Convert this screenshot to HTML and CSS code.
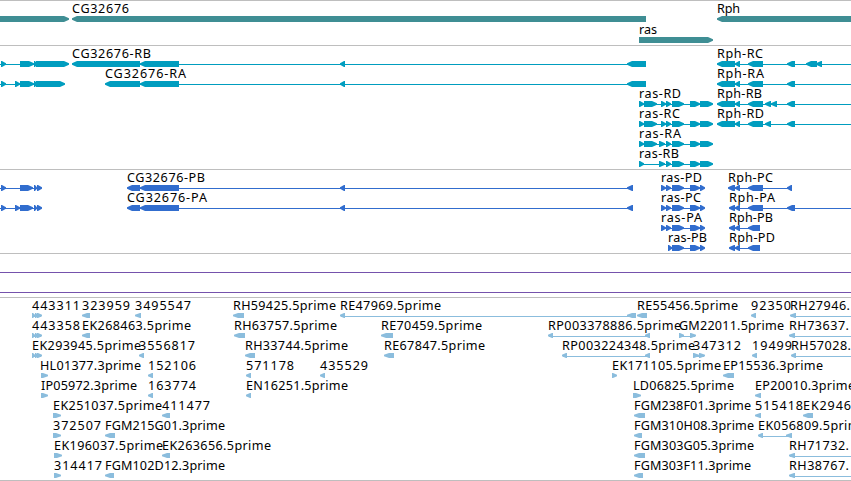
FILE: index.html
```html
<!DOCTYPE html>
<html lang="en">
<head>
<meta charset="utf-8">
<title>Genome browser</title>
<link rel="stylesheet" href="styles.css">
</head>
<body>
<main class="browser">
<svg class="track genes" id="genes" width="851" height="44"></svg>
<svg class="track transcripts" id="transcripts" width="851" height="123"></svg>
<svg class="track proteins" id="proteins" width="851" height="83"></svg>
<section class="track scaffolds"><div class="scaffold"></div><div class="scaffold"></div></section>
<svg class="track ests" id="ests" width="851" height="182"></svg>
</main>
<script src="tracks.js"></script>
</body>
</html>
```
FILE: styles.css
```css
body {
  margin: 0;
  background: #fff;
  overflow: hidden;
}
.browser {
  display: flex;
  flex-direction: column;
  width: 851px;
  height: 480px;
  border-bottom: 1px solid #bebebe;
}
.track {
  display: block;
  flex: none;
  border-top: 1px solid #bebebe;
}
.genes { color: #3f8e94; }
.transcripts { color: #009dbf; }
.proteins { color: #316dce; }
.ests { color: #8bbddd; }
.scaffolds {
  height: 25px;
  padding-top: 18px;
  display: flex;
  flex-direction: column;
  gap: 19px;
}
.scaffold {
  flex: none;
  height: 1px;
  background: #7552ac;
}
.label {
  font-family: "Noto Sans", "DejaVu Sans", sans-serif;
  font-size: 12.6px;
  fill: #000;
}
.shape { fill: currentColor; }
```
FILE: tracks.js
```js
// Each feature: y, strand, blocks "start-end ...", label, label x, label end, optional line end.
const exRas = "672-684 690-700 700-713", cdRas = "672-684 690-700 700-705";
const tracks = {
  genes: { top: 1, half: 3, items: [
    [19, 1, "-20-69"],
    [19, -1, "72-646", "CG32676", 72, 129],
    [19, -1, "717-870", "Rph", 717, 740],
    [40, 1, "639-713", "ras", 639, 657]
  ]},
  transcripts: { top: 46, half: 3, items: [
    [64, 1, "-9--4 1-6 20-34 34-37 36-69"],
    [84, 1, "-9--4 1-6 15-20 20-34 34-37 36-65"],
    [64, -1, "72-140 140-179 340-345 627-646", "CG32676-RB", 72, 151],
    [84, -1, "105-140 140-179 340-345 627-646", "CG32676-RA", 105, 186],
    [64, -1, "717-735 735-740 748-763 787-795 806-817 816-822 870-880", "Rph-RC", 717, 763],
    [84, -1, "717-735 735-740 748-763 787-795 870-880", "Rph-RA", 717, 764],
    [104, -1, "717-735 735-740 748-763 765-771 771-777 787-795 870-880", "Rph-RB", 717, 762],
    [124, -1, "717-735 735-740 748-763 765-771 787-795 870-880", "Rph-RD", 717, 764],
    [104, 1, "639-644 644-657 661-666 666-671 " + exRas, "ras-RD", 639, 681],
    [124, 1, "639-644 644-657 661-666 666-671 " + exRas, "ras-RC", 639, 680],
    [144, 1, "639-644 644-657 659-665 666-671 " + exRas, "ras-RA", 639, 681],
    [164, 1, "639-644 659-665 666-671 " + exRas, "ras-RB", 639, 679]
  ]},
  proteins: { top: 170, half: 3, items: [
    [188, 1, "-9--4 1-6 20-33 34-37 37-42"],
    [208, 1, "-9--4 1-6 15-20 20-33 34-37 37-42"],
    [188, -1, "127-140 140-179 340-345 627-633", "CG32676-PB", 127, 205],
    [208, -1, "127-140 140-179 340-345 627-633", "CG32676-PA", 127, 207],
    [188, 1, "661-666 666-671 " + cdRas, "ras-PD", 661, 702],
    [208, 1, "661-666 666-671 " + cdRas, "ras-PC", 661, 701],
    [228, 1, "661-666 666-671 " + cdRas, "ras-PA", 661, 702],
    [248, 1, "668-672 " + cdRas, "ras-PB", 668, 707],
    [188, -1, "728-735 735-740 748-763 787-792", "Rph-PC", 728, 773],
    [208, -1, "729-735 735-740 748-763 787-795 870-880", "Rph-PA", 729, 775],
    [228, -1, "729-735 735-740 748-760", "Rph-PB", 729, 773],
    [248, -1, "729-735 735-740 748-760", "Rph-PD", 729, 775]
  ]},
  ests: { top: 298, half: 2.5, items: [
    [316, 1, "32-35 35-38 37-42", "443311", 32, 80],
    [316, -1, "82-90", "323959", 82, 130],
    [316, -1, "135-141", "3495547", 135, 191],
    [316, -1, "233-244", "RH59425.5prime", 233, 336],
    [316, -1, "340-345 627-636", "RE47969.5prime", 340, 441],
    [316, -1, "637-647", "RE55456.5prime", 637, 738],
    [316, -1, "751-756", "92350", 751, 791],
    [316, -1, "790-796 870-880", "RH27946.", 790, 850],
    [336, 1, "32-35 35-38 37-42", "443358", 32, 80],
    [336, -1, "82-90", "EK268463.5prime", 82, 191],
    [336, -1, "234-245", "RH63757.5prime", 234, 337],
    [336, -1, "381-393", "RE70459.5prime", 381, 482],
    [336, -1, "548-553 645-650", "RP003378886.5prime", 548, 681],
    [336, 1, "679-684 690-696", "GM22011.5prime", 679, 784],
    [336, -1, "789-795 870-880", "RH73637.", 789, 849],
    [356, 1, "32-35 35-38 37-42", "EK293945.5prime", 32, 141],
    [356, -1, "139-144", "3556817", 139, 195],
    [356, -1, "245-255", "RH33744.5prime", 245, 348],
    [356, -1, "384-394", "RE67847.5prime", 384, 485],
    [356, -1, "562-567 645-650", "RP003224348.5prime", 562, 695],
    [356, 1, "693-699 699-705", "347312", 693, 741],
    [356, -1, "752-757", "19499", 752, 792],
    [356, -1, "791-796 870-880", "RH57028.", 791, 851],
    [376, 1, "41-48", "HL01377.3prime", 40, 141],
    [376, -1, "148-153", "152106", 148, 196],
    [376, -1, "246-251", "571178", 246, 294],
    [376, -1, "320-325", "435529", 320, 368],
    [376, 1, "612-617", "EK171105.5prime", 612, 721],
    [376, -1, "723-734", "EP15536.3prime", 723, 823],
    [396, 1, "41-48", "IP05972.3prime", 41, 137],
    [396, -1, "148-153", "163774", 148, 196],
    [396, -1, "246-251", "EN16251.5prime", 246, 348],
    [396, 1, "633-641", "LD06825.5prime", 633, 734],
    [396, -1, "755-761", "EP20010.3prime", 755, 855],
    [416, 1, "53-61", "EK251037.5prime", 53, 162],
    [416, -1, "162-170", "411477", 162, 210],
    [416, -1, "634-645", "FGM238F01.3prime", 634, 751],
    [416, -1, "755-761", "515418", 755, 803],
    [416, -1, "803-813", "EK2946", 803, 851],
    [436, 1, "53-61", "372507", 53, 101],
    [436, -1, "105-115", "FGM215G01.3prime", 105, 225],
    [436, -1, "634-642", "FGM310H08.3prime", 634, 754],
    [436, -1, "758-763 786-792", "EK056809.5prime", 758, 867],
    [456, 1, "54-62", "EK196037.5prime", 54, 163],
    [456, -1, "162-170", "EK263656.5prime", 162, 271],
    [456, -1, "634-645", "FGM303G05.3prime", 634, 754],
    [456, -1, "789-795 870-880", "RH71732.", 789, 849],
    [476, 1, "54-61", "314417", 54, 102],
    [476, -1, "105-114", "FGM102D12.3prime", 105, 225],
    [476, -1, "634-643", "FGM303F11.3prime", 634, 751],
    [476, -1, "789-795 870-880", "RH38767.", 789, 849]
  ]}
};

function make(name, attrs) {
  const el = document.createElementNS("http://www.w3.org/2000/svg", name);
  for (const key in attrs) el.setAttribute(key, attrs[key]);
  return el;
}

for (const id in tracks) {
  const svg = document.getElementById(id);
  const { top, half, items } = tracks[id];
  for (const [row, strand, blocks, name, x, end] of items) {
    const y = row - top;
    const spans = [...blocks.matchAll(/(-?\d+)-(-?\d+)/g)].map(m => [+m[1], +m[2]]);
    const first = spans[0][0], last = spans[spans.length - 1][1];
    if (spans.length > 1) {
      svg.append(make("rect", { class: "shape", x: first + 1, y, width: last - first - 2, height: 1 }));
    }
    for (const [a, b] of spans) {
      const head = Math.min(b - a - 1, 5);
      const back = strand > 0 ? a : b;
      const tip = strand > 0 ? b : a;
      const neck = tip - strand * head;
      const t = y - 3, bot = t + half * 2, mid = (t + bot) / 2;
      svg.append(make("path", { class: "shape",
        d: `M${back} ${t}H${neck}L${tip} ${mid - 0.7}V${mid + 0.7}L${neck} ${bot}H${back}Z` }));
    }
    if (name) {
      const label = make("text", { class: "label", x, y: y - 6, textLength: end - x });
      label.textContent = name;
      svg.append(label);
    }
  }
}
```
